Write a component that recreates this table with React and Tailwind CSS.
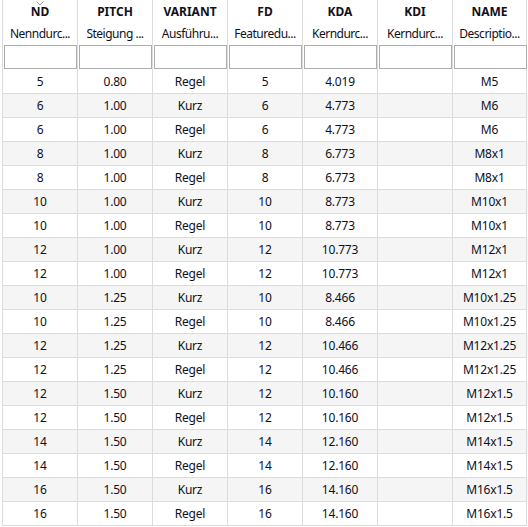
import React from 'react';

const columns = [
    { title: 'ND', sub: 'Nenndurc...' },
    { title: 'PITCH', sub: 'Steigung ...' },
    { title: 'VARIANT', sub: 'Ausführu...' },
    { title: 'FD', sub: 'Featuredu...' },
    { title: 'KDA', sub: 'Kerndurc...' },
    { title: 'KDI', sub: 'Kerndurc...' },
    { title: 'NAME', sub: 'Descriptio...' },
];

const rows = [
    ['5', '0.80', 'Regel', '5', '4.019', '', 'M5'],
    ['6', '1.00', 'Kurz', '6', '4.773', '', 'M6'],
    ['6', '1.00', 'Regel', '6', '4.773', '', 'M6'],
    ['8', '1.00', 'Kurz', '8', '6.773', '', 'M8x1'],
    ['8', '1.00', 'Regel', '8', '6.773', '', 'M8x1'],
    ['10', '1.00', 'Kurz', '10', '8.773', '', 'M10x1'],
    ['10', '1.00', 'Regel', '10', '8.773', '', 'M10x1'],
    ['12', '1.00', 'Kurz', '12', '10.773', '', 'M12x1'],
    ['12', '1.00', 'Regel', '12', '10.773', '', 'M12x1'],
    ['10', '1.25', 'Kurz', '10', '8.466', '', 'M10x1.25'],
    ['10', '1.25', 'Regel', '10', '8.466', '', 'M10x1.25'],
    ['12', '1.25', 'Kurz', '12', '10.466', '', 'M12x1.25'],
    ['12', '1.25', 'Regel', '12', '10.466', '', 'M12x1.25'],
    ['12', '1.50', 'Kurz', '12', '10.160', '', 'M12x1.5'],
    ['12', '1.50', 'Regel', '12', '10.160', '', 'M12x1.5'],
    ['14', '1.50', 'Kurz', '14', '12.160', '', 'M14x1.5'],
    ['14', '1.50', 'Regel', '14', '12.160', '', 'M14x1.5'],
    ['16', '1.50', 'Kurz', '16', '14.160', '', 'M16x1.5'],
    ['16', '1.50', 'Regel', '16', '14.160', '', 'M16x1.5'],
];

export default function App() {
    return (
        <div className="w-[528px] h-[527px] overflow-hidden bg-white pl-[2px] text-[12px] text-[#10101a]" style={{ fontFamily: '"Noto Sans", "Open Sans", sans-serif' }}>
            <div className="flex">
                {columns.map((col, i) => (
                    <div key={col.title} className={`relative w-[75px] border-l border-[#dcdcdc] flex flex-col ${i === 6 ? 'border-r' : ''}`}>
                        {i === 0 && (
                            <svg className="absolute left-[33px] top-[1px]" width="8" height="5" viewBox="0 0 8 5">
                                <path d="M0.5 0.5 L4 4 L7.5 0.5" fill="none" stroke="#9a9a9a" strokeWidth="1" />
                            </svg>
                        )}
                        <div className="h-[24px] leading-[24px] text-center font-bold">{col.title}</div>
                        <div className="h-[20px] leading-[20px] text-center whitespace-nowrap overflow-hidden tracking-[-0.5px]">{col.sub}</div>
                        <div className="mt-[1px] mb-[1px] ml-[1px] h-[24px] w-[73px] border border-[#adadad] bg-white"></div>
                    </div>
                ))}
            </div>
            {rows.map((row, r) => (
                <div key={r} className={`flex ${r % 2 === 1 ? 'bg-[#f5f5f5]' : 'bg-white'}`}>
                    {row.map((cell, c) => (
                        <div key={c} className={`w-[75px] h-[24px] leading-[23px] text-center border-l border-b border-[#dcdcdc] tracking-[-0.2px] ${c === 6 ? 'border-r' : ''}`}>
                            {cell}
                        </div>
                    ))}
                </div>
            ))}
        </div>
    );
}
